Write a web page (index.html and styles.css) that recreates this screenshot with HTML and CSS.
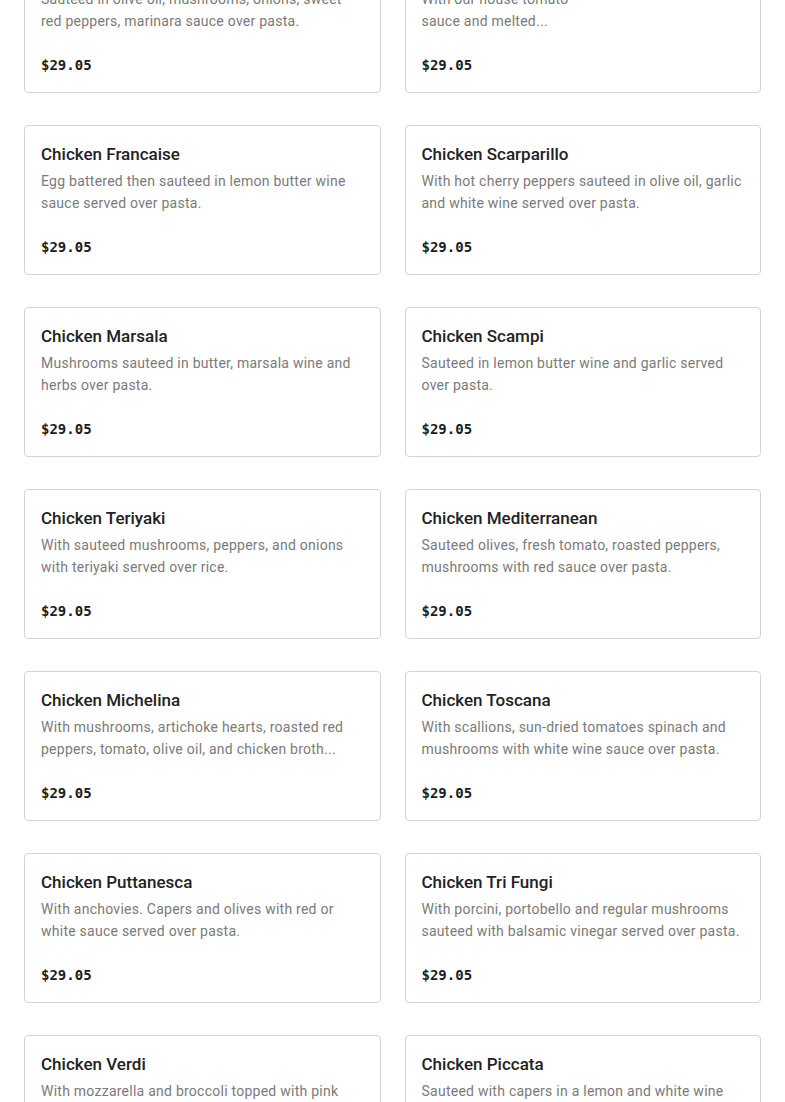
FILE: index.html
```
<!DOCTYPE html>
<html>
<head>
<meta charset="utf-8">
<link rel="stylesheet" href="styles.css">
</head>
<body>
<div class="menu">
  <div class="card"><div class="title">Chicken Cacciatore</div><div class="desc">Sauteed in olive oil, mushrooms, onions, sweet red peppers, marinara sauce over pasta.</div><div class="price">$29.05</div></div>
  <div class="card"><div class="title">Chicken Parmigiana</div><div class="desc">With our house tomato<br>sauce and melted...</div><div class="price">$29.05</div></div>
  <div class="card"><div class="title">Chicken Francaise</div><div class="desc">Egg battered then sauteed in lemon butter wine sauce served over pasta.</div><div class="price">$29.05</div></div>
  <div class="card"><div class="title">Chicken Scarparillo</div><div class="desc">With hot cherry peppers sauteed in olive oil, garlic and white wine served over pasta.</div><div class="price">$29.05</div></div>
  <div class="card"><div class="title">Chicken Marsala</div><div class="desc">Mushrooms sauteed in butter, marsala wine and herbs over pasta.</div><div class="price">$29.05</div></div>
  <div class="card"><div class="title">Chicken Scampi</div><div class="desc">Sauteed in lemon butter wine and garlic served over pasta.</div><div class="price">$29.05</div></div>
  <div class="card"><div class="title">Chicken Teriyaki</div><div class="desc">With sauteed mushrooms, peppers, and onions with teriyaki served over rice.</div><div class="price">$29.05</div></div>
  <div class="card"><div class="title">Chicken Mediterranean</div><div class="desc">Sauteed olives, fresh tomato, roasted peppers, mushrooms with red sauce over pasta.</div><div class="price">$29.05</div></div>
  <div class="card"><div class="title">Chicken Michelina</div><div class="desc">With mushrooms, artichoke hearts, roasted red peppers, tomato, olive oil, and chicken broth...</div><div class="price">$29.05</div></div>
  <div class="card"><div class="title">Chicken Toscana</div><div class="desc">With scallions, sun-dried tomatoes spinach and mushrooms with white wine sauce over pasta.</div><div class="price">$29.05</div></div>
  <div class="card"><div class="title">Chicken Puttanesca</div><div class="desc">With anchovies. Capers and olives with red or white sauce served over pasta.</div><div class="price">$29.05</div></div>
  <div class="card"><div class="title">Chicken Tri Fungi</div><div class="desc">With porcini, portobello and regular mushrooms sauteed with balsamic vinegar served over pasta.</div><div class="price">$29.05</div></div>
  <div class="card"><div class="title">Chicken Verdi</div><div class="desc">With mozzarella and broccoli topped with pink sauce served over pasta.</div><div class="price">$29.05</div></div>
  <div class="card"><div class="title">Chicken Piccata</div><div class="desc">Sauteed with capers in a lemon and white wine sauce served over pasta.</div><div class="price">$29.05</div></div>
</div>
</body>
</html>
```
FILE: styles.css
```
html, body {
  margin: 0;
  padding: 0;
  background: #fff;
}
body {
  font-family: Roboto, "Liberation Sans", sans-serif;
  overflow: hidden;
}
.menu {
  display: grid;
  grid-template-columns: 1fr 1fr;
  column-gap: 24px;
  row-gap: 32px;
  padding: 0 24px;
  margin-top: -57px;
}
.card {
  border: 1px solid #d4d4d4;
  border-radius: 4px;
  padding: 16px;
  height: 150px;
  box-sizing: border-box;
}
.title {
  font-size: 17px;
  line-height: 24px;
  font-weight: 500;
  color: #222;
}
.desc {
  margin-top: 4px;
  font-size: 14px;
  line-height: 22px;
  color: #7a7a7a;
  letter-spacing: 0.25px;
  height: 44px;
}
.price {
  margin-top: 22px;
  font-family: "DejaVu Sans Mono", monospace;
  font-weight: bold;
  font-size: 14px;
  line-height: 22px;
  color: #1c1c1c;
}
```
